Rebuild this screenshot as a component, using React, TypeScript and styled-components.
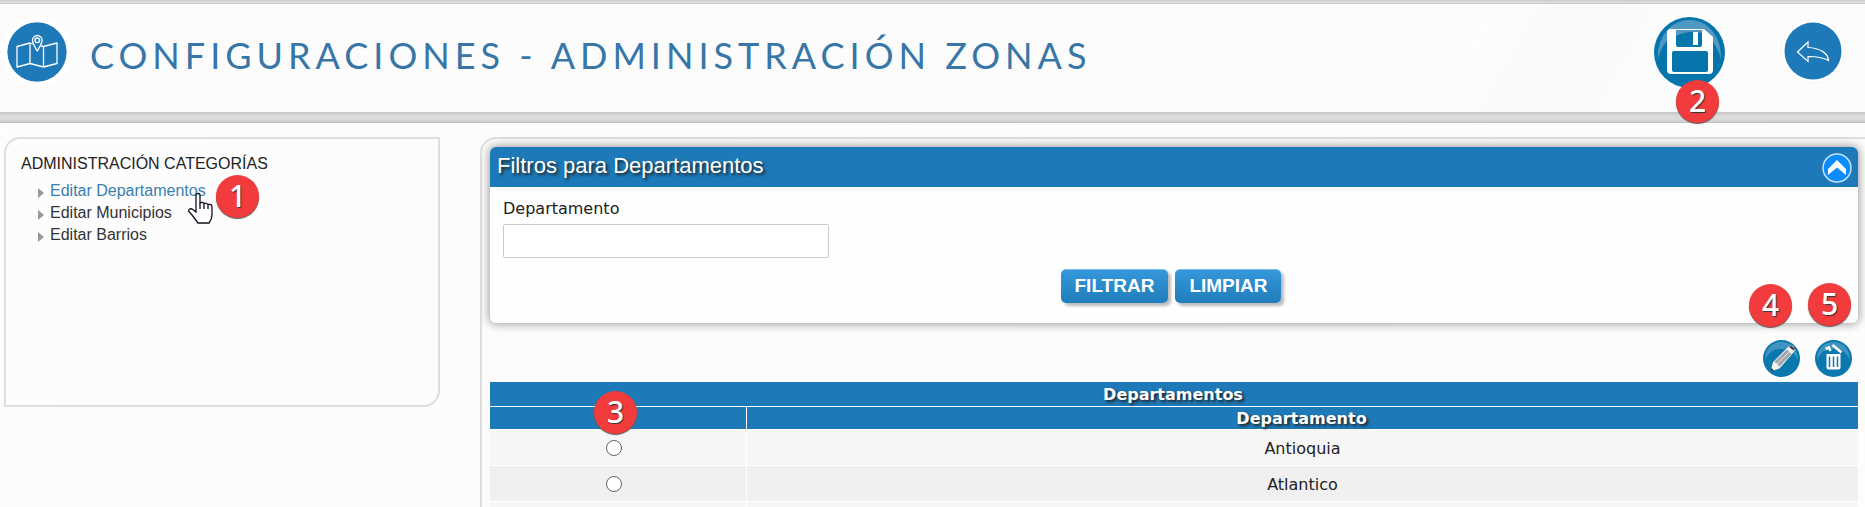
import React from 'react';
import styled, { createGlobalStyle, css } from 'styled-components';

const blue = '#1d79b7';
const line = '#dedede';
const arial = '"Liberation Sans", Arial, sans-serif';
const dejavu = '"DejaVu Sans", Verdana, sans-serif';

const GlobalStyle = createGlobalStyle`
  *, *::before, *::after { box-sizing: border-box; }
  body {
    margin: 0;
    background: #fcfcfc;
    color: #222;
    font-family: ${dejavu};
    font-size: 16px;
    overflow: hidden;
  }
`;

const Page = styled.div`
  height: 100vh;
  overflow: hidden;
  display: flex;
  flex-direction: column;
`;

const Band = styled.div<{ $size: number }>`
  flex: none;
  height: ${p => p.$size}px;
  background: linear-gradient(#c6c6c6, #dcdcdc 40%, #dadada 70%, #c0c0c0);
`;

const Header = styled.header`
  flex: none;
  display: flex;
  align-items: center;
  height: 108px;
  padding: 0 19px 12px 7px;
  background: linear-gradient(118deg, #fcfcfc 0 64%, #fdfdfd 78%, #f9f9f9 82%, #fcfcfc 88%);
`;

const Title = styled.h1`
  flex: 1;
  margin: 0 0 0 23px;
  padding-top: 6px;
  color: #3776a6;
  font-family: Lato, sans-serif;
  font-size: 36px;
  font-weight: 400;
  line-height: 44px;
  letter-spacing: 5px;
  white-space: nowrap;
`;

const IconButton = styled.button`
  position: relative;
  display: block;
  padding: 0;
  border: 0;
  background: none;
  cursor: pointer;
  svg { display: block; }
`;

const HeaderActions = styled.div`
  display: flex;
  align-items: center;
  gap: 55px;
`;

const Badge = styled.span<{ $left: number; $top: number }>`
  position: absolute;
  left: ${p => p.$left}px;
  top: ${p => p.$top}px;
  z-index: 2;
  width: 43px;
  height: 43px;
  border-radius: 50%;
  background: #f23b3d;
  box-shadow: 0 1px 1px #555;
  color: #fff;
  font: 500 30px/42px "Noto Sans", sans-serif;
  text-align: center;
  text-shadow: 1px 1px 1px #333;
`;

const Body = styled.div`
  flex: 1;
  display: flex;
  align-items: flex-start;
  gap: 40px;
  padding: 14px 0 0 4px;
  background: linear-gradient(118deg, #fdfdfd, #fbfbfb 60%, #fdfdfd);
`;

const Sidebar = styled.nav`
  flex: none;
  width: 436px;
  min-height: 270px;
  padding: 15px;
  border: 2px solid ${line};
  border-radius: 16px 0 16px 0;
  font-family: ${arial};
`;

const SidebarTitle = styled.h2`
  margin: 0 0 6px;
  font-size: 16px;
  font-weight: 400;
  line-height: 20px;
`;

const Menu = styled.ul`
  margin: 0;
  padding: 0 0 0 17px;
  list-style: none;
`;

const MenuItem = styled.li`
  display: flex;
  align-items: center;
  gap: 6px;
  height: 22px;
  &::before {
    content: '';
    margin-top: 4px;
    border: 5px solid transparent;
    border-left: 6px solid #999;
    border-right: 0;
  }
`;

const MenuLink = styled.a<{ $active?: boolean }>`
  position: relative;
  color: ${p => (p.$active ? '#3a7fb0' : '#333')};
  text-decoration: none;
`;

const Pointer = styled.svg`
  position: absolute;
  left: 137px;
  top: 10px;
  z-index: 1;
`;

const Main = styled.main`
  flex: 1;
  min-width: 0;
  min-height: 400px;
  padding: 8px 7px 0 8px;
  border: solid ${line};
  border-width: 2px 0 0 2px;
  border-radius: 16px 0 0 0;
`;

const Filters = styled.section`
  border-radius: 6px;
  background: #fefefe;
  box-shadow: 0 0 10px 1px #999;
`;

const lettersShadow = css`text-shadow: 2px 2px 3px #222;`;

const FiltersHeader = styled.div`
  display: flex;
  align-items: center;
  justify-content: space-between;
  height: 40px;
  padding: 2px 6px 0 7px;
  border-radius: 6px 6px 0 0;
  background: ${blue};
`;

const FiltersTitle = styled.h2`
  margin: 0;
  padding-bottom: 5px;
  color: #fff;
  font: 400 22px/28px ${arial};
  ${lettersShadow}
`;

const FiltersForm = styled.form`
  display: flex;
  flex-direction: column;
  align-items: flex-start;
  padding: 12px 13px 20px;
`;

const Label = styled.label`
  line-height: 20px;
`;

const TextInput = styled.input`
  width: 326px;
  height: 34px;
  margin: 5px 0 11px;
  padding: 4px 8px;
  border: 1px solid #ccc;
  border-radius: 2px;
  background: #fff;
  font: 16px ${dejavu};
`;

const FormButtons = styled.div`
  display: flex;
  align-self: center;
  gap: 7px;
  padding-right: 6px;
`;

const FormButton = styled.button`
  height: 34px;
  padding: 0 14px 2px;
  border: 0;
  border-top: 1px solid #7dbde8;
  border-radius: 5px;
  background: linear-gradient(#3498db, #217dbb);
  box-shadow: 3px 3px 3px #bbb;
  color: #fff;
  font: 700 19px/30px ${arial};
  cursor: pointer;
`;

const RowActions = styled.div`
  display: flex;
  justify-content: flex-end;
  gap: 15px;
  padding: 17px 6px 5px 0;
`;

const Table = styled.table`
  width: 100%;
  border-collapse: separate;
  border-spacing: 0;
  table-layout: fixed;
  text-align: center;
`;

const PickColumn = styled.col`
  width: 257px;
`;

const HeadCell = styled.th<{ $split?: boolean; $tall?: boolean }>`
  position: relative;
  height: ${p => (p.$tall ? 25 : 23)}px;
  padding: 2px 2px 0 0;
  border-bottom: 1px solid #fff;
  border-right: ${p => (p.$split ? '1px solid #fff' : 0)};
  background: ${blue};
  color: #fff;
  font-size: 16px;
  line-height: 20px;
  ${lettersShadow}
`;

const Row = styled.tr`
  background: #f6f6f6;
  &:nth-child(even) { background: #f0f0f0; }
`;

const Cell = styled.td<{ $split?: boolean }>`
  height: 36px;
  padding: 1px 0 0;
  border-bottom: 1px solid #fff;
  border-right: ${p => (p.$split ? '1px solid #fff' : 0)};
`;

const Radio = styled.input`
  appearance: none;
  display: block;
  width: 16px;
  height: 16px;
  margin: 0 auto;
  border: 1px solid #666;
  border-radius: 50%;
  background: #fff;
  &:checked { box-shadow: inset 0 0 0 3px #fff; background: ${blue}; }
`;

const RadioBox = styled.div`
  padding-right: 8px;
`;

const MapLogo = styled.svg`
  flex: none;
  border-radius: 50%;
  box-shadow: 0 0 0 5px #fff;
`;

const MapIcon = () => (
  <MapLogo width="60" height="60" viewBox="0 0 60 60" aria-hidden="true">
    <circle cx="30" cy="30" r="29.700" fill={blue} />
    <g fill="none" stroke="#fff" strokeWidth="1.300" strokeLinejoin="round">
      <path d="M26 22 23 21 10 24.500V45L23 41.500 36.500 45 50 41.500V21L36.500 24.500 34 24M23 21V41.500M36.500 25V45" />
      <path d="M30.300 29C27.500 24 25.500 21.500 25.500 18.300a4.800 4.800 0 0 1 9.600 0C35.100 21.500 33 24 30.300 29Z" />
      <circle cx="30.300" cy="18.300" r="2.300" />
    </g>
  </MapLogo>
);

const SaveIcon = () => (
  <svg width="71" height="71" viewBox="0 0 71 71" aria-hidden="true">
    <circle cx="35.500" cy="35.500" r="35.500" fill="#0575ac" />
    <path d="M4 42C3 20 17 3 35.500 3S68 20 67 42C63 26 53 14 35.500 14S8 26 4 42Z" fill="#5199c3" />
    <path d="M17 12H50L59 20V53a4 4 0 0 1-4 4H17a4 4 0 0 1-4-4V16a4 4 0 0 1 4-4Z" fill="#fff" />
    <rect x="22" y="13" width="26" height="17" rx="2" fill="#0575ac" />
    <path d="M22 13H48V16C38 14 30 15 22 19Z" fill="#5199c3" />
    <rect x="39" y="15" width="5" height="13" fill="#fff" />
    <rect x="18" y="34" width="36" height="21" rx="2" fill="#0575ac" />
  </svg>
);

const BackIcon = () => (
  <svg width="66" height="66" viewBox="0 0 66 66" aria-hidden="true">
    <circle cx="33" cy="32" r="32" fill="#fff" stroke="#f5f5f5" />
    <circle cx="33" cy="32" r="28.500" fill={blue} />
    <path d="M17.500 33 28 23V28.500C40 29 48 34 48.500 41.500C43 38.500 36 37.500 28 37.500V42.500Z" fill="none" stroke="#fff" strokeWidth="1.200" />
  </svg>
);

const CollapseIcon = () => (
  <svg width="30" height="30" viewBox="0 0 30 30" aria-hidden="true">
    <circle cx="15" cy="15" r="14" fill="#0a8cff" stroke="#c5e2f7" strokeWidth="1.500" />
    <path d="M6 16 15 7l9 9V22l-9-7.500L6 22Z" fill="#fff" />
  </svg>
);

const RoundBase = () => (
  <>
    <circle cx="18.500" cy="18.500" r="18.500" fill="#0878ae" />
    <path d="M2 20C2 9 9 2 18.500 2S35 9 35 20C31 12 27 9 18.500 9S6 12 2 20Z" fill="#3f94c0" />
  </>
);

const EditIcon = () => (
  <svg width="37" height="37" viewBox="0 0 37 37" aria-hidden="true">
    <RoundBase />
    <path d="M7.500 31.500 10 22 24.500 7.500 27 5.500Q29 5 30.500 6.500T32 10L30 13 16.500 28.500Z" fill="#f1f1f1" />
    <path d="M11 22 24 9.500 28.500 14 16 27Q15 23 11 22Z" fill="#a5a8ac" />
    <path d="M13.500 24.500 26.500 11.500" stroke="#dedede" />
    <path d="M26 7 28 5.500 32 8.500 30.500 10.500Z" fill="#444" />
    <path d="M7.500 31.500 8.500 28 11 30.500Z" fill="#333" />
  </svg>
);

const DeleteIcon = () => (
  <svg width="37" height="37" viewBox="0 0 37 37" aria-hidden="true">
    <RoundBase />
    <path d="M11.500 14H25.500V27.500a2 2 0 0 1-2 2h-10a2 2 0 0 1-2-2Z" fill="#fff" />
    <path d="M14.500 16.500V27M18.500 16.500V27M22.500 16.500V27" stroke="#0878ae" strokeWidth="1.500" />
    <path d="M17.500 5 26.500 12.500M10.500 9 14 7.500 15.500 11" fill="none" stroke="#fff" strokeWidth="2.500" />
  </svg>
);

const departments = ['Antioquia', 'Atlantico'];

export default function App() {
  return (
    <Page>
      <GlobalStyle />
      <Band $size={4} />
      <Header>
        <MapIcon />
        <Title>CONFIGURACIONES - ADMINISTRACIÓN ZONAS</Title>
        <HeaderActions>
          <IconButton type="button" aria-label="Guardar">
            <SaveIcon />
            <Badge $left={22} $top={63}>2</Badge>
          </IconButton>
          <IconButton type="button" aria-label="Volver">
            <BackIcon />
          </IconButton>
        </HeaderActions>
      </Header>
      <Band $size={11} />
      <Body>
        <Sidebar>
          <SidebarTitle>ADMINISTRACIÓN CATEGORÍAS</SidebarTitle>
          <Menu>
            <MenuItem>
              <MenuLink href="#departamentos" $active>
                Editar Departamentos
                <Pointer width="26" height="33" viewBox="0 0 26 33" aria-hidden="true">
                  <path d="M9 19V3.500a2 2 0 0 1 4 0V11q2-1.500 4 .5 2-1 4 1 4-1 4 2.500V23q0 4-3 8H11Q8 27 5 23L1.500 19Q2 15.500 6 17.500L9 20Z" fill="#fff" stroke="#111122" strokeWidth="1.300" />
                  <path d="M13 11v6M17 11.500V17M21 13v4" stroke="#111122" strokeWidth="1.300" />
                </Pointer>
                <Badge $left={166} $top={-7}>1</Badge>
              </MenuLink>
            </MenuItem>
            <MenuItem><MenuLink href="#municipios">Editar Municipios</MenuLink></MenuItem>
            <MenuItem><MenuLink href="#barrios">Editar Barrios</MenuLink></MenuItem>
          </Menu>
        </Sidebar>
        <Main>
          <Filters>
            <FiltersHeader>
              <FiltersTitle>Filtros para Departamentos</FiltersTitle>
              <IconButton type="button" aria-label="Contraer filtros"><CollapseIcon /></IconButton>
            </FiltersHeader>
            <FiltersForm onSubmit={e => e.preventDefault()}>
              <Label htmlFor="departamento">Departamento</Label>
              <TextInput id="departamento" type="text" />
              <FormButtons>
                <FormButton type="submit">FILTRAR</FormButton>
                <FormButton type="reset">LIMPIAR</FormButton>
              </FormButtons>
            </FiltersForm>
          </Filters>
          <RowActions>
            <IconButton type="button" aria-label="Editar">
              <EditIcon />
              <Badge $left={-14} $top={-56}>4</Badge>
            </IconButton>
            <IconButton type="button" aria-label="Eliminar">
              <DeleteIcon />
              <Badge $left={-7} $top={-57}>5</Badge>
            </IconButton>
          </RowActions>
          <Table>
            <colgroup><PickColumn /><col /></colgroup>
            <thead>
              <tr><HeadCell colSpan={2} $tall>Departamentos</HeadCell></tr>
              <tr>
                <HeadCell $split><Badge $left={104} $top={-16}>3</Badge></HeadCell>
                <HeadCell>Departamento</HeadCell>
              </tr>
            </thead>
            <tbody>
              {departments.map(name => (
                <Row key={name}>
                  <Cell $split>
                    <RadioBox><Radio type="radio" name="zona" aria-label={name} /></RadioBox>
                  </Cell>
                  <Cell>{name}</Cell>
                </Row>
              ))}
              <Row><Cell $split /><Cell /></Row>
            </tbody>
          </Table>
        </Main>
      </Body>
    </Page>
  );
}
